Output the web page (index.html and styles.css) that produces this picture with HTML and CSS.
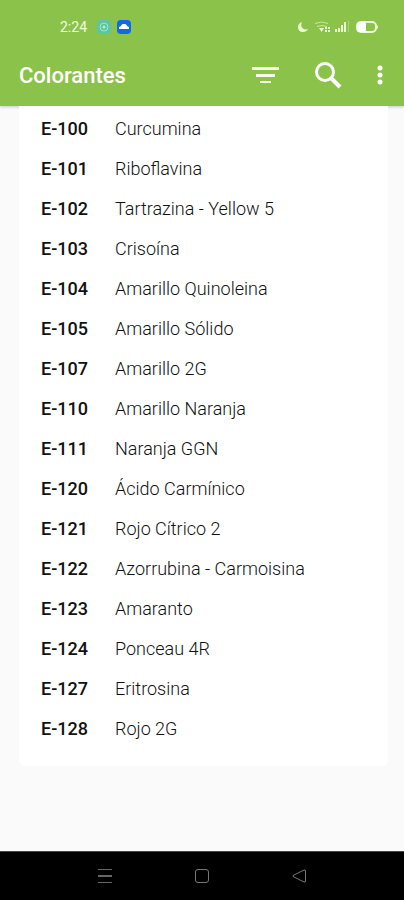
FILE: index.html
```
<!DOCTYPE html>
<html lang="es">
<head>
    <meta charset="UTF-8">
    <meta name="viewport" content="width=device-width, initial-scale=1.0">
    <title>Colorantes</title>
    <link rel="stylesheet" href="styles.css">
</head>
<body>
    <header>
        <div class="status-bar">
            <span class="time">2:24</span>
            <svg class="app-icon" width="14" height="14" viewBox="0 0 14 14">
                <rect width="14" height="14" rx="4" fill="#5cc6a4"/>
                <circle cx="7" cy="7" r="4" fill="none" stroke="#a5e3c4"/>
                <circle cx="7" cy="7" r="1.5" fill="#b5ead0"/>
            </svg>
            <svg class="app-icon" width="14" height="14" viewBox="0 0 14 14">
                <rect width="14" height="14" rx="4" fill="#0b6be8"/>
                <path d="M2 9V7l2-1c.3-1.500 1.400-2 3-2s2.700.5 3 2l2 1v2z" fill="#fff"/>
            </svg>
            <svg class="system-icons" width="84" height="14" viewBox="0 0 84 14" fill="#edf8d5">
                <path d="M5 2C2.500 3 1 4.500 1 7c0 3 2 5 5 5 2.300 0 4-1 5-3-3 1-5.500 0-6.300-2C4 5.500 4.200 3.500 5 2z"/>
                <path d="M18 3.500q7-3 13 0M20 6.500q5-2 10 0" fill="none" stroke="#c9e6a0"/>
                <path d="M22 8h5l-2.500 4zM28 7h2v2h-2zM31 7h2v2h-2zM28 10h2v2h-2zM31 10h2v2h-2z"/>
                <path d="M38 9h2v3h-2zM41 8h2v4h-2zM44 5h2v7h-2zM47 2h2v10h-2z"/>
                <path d="M51 1h1v11h-1z" fill="#a8d36f"/>
                <rect x="60" y="2" width="19" height="10" rx="4" fill="none" stroke="#edf8d5" stroke-width="2"/>
                <rect x="60" y="2" width="9" height="10" rx="2" fill="#fff"/>
                <path d="M80 5q2 2 0 4z"/>
            </svg>
        </div>
        <div class="app-bar">
            <h1>Colorantes</h1>
            <button type="button" aria-label="Filtrar">
                <svg width="28" height="18" viewBox="0 0 28 18" fill="#f6fce9">
                    <path d="M1 1h27v3H1zM5 8h19v3H5zM9 15h11v2H9z"/>
                </svg>
            </button>
            <button type="button" aria-label="Buscar">
                <svg width="28" height="28" viewBox="0 0 28 28" fill="none" stroke="#fff">
                    <circle cx="11" cy="11" r="8.500" stroke-width="3"/>
                    <path d="M17 17l9 9" stroke-width="4"/>
                </svg>
            </button>
            <button type="button" aria-label="Más opciones">
                <svg width="6" height="20" viewBox="0 0 6 20" fill="#fff">
                    <circle cx="3" cy="3" r="2.500"/>
                    <circle cx="3" cy="10" r="2.500"/>
                    <circle cx="3" cy="17" r="2.500"/>
                </svg>
            </button>
        </div>
    </header>

    <main>
        <div class="card">
            <table>
                <tr><th scope="row">E-100</th><td>Curcumina</td></tr>
                <tr><th scope="row">E-101</th><td>Riboflavina</td></tr>
                <tr><th scope="row">E-102</th><td>Tartrazina - Yellow 5</td></tr>
                <tr><th scope="row">E-103</th><td>Crisoína</td></tr>
                <tr><th scope="row">E-104</th><td>Amarillo Quinoleina</td></tr>
                <tr><th scope="row">E-105</th><td>Amarillo Sólido</td></tr>
                <tr><th scope="row">E-107</th><td>Amarillo 2G</td></tr>
                <tr><th scope="row">E-110</th><td>Amarillo Naranja</td></tr>
                <tr><th scope="row">E-111</th><td>Naranja GGN</td></tr>
                <tr><th scope="row">E-120</th><td>Ácido Carmínico</td></tr>
                <tr><th scope="row">E-121</th><td>Rojo Cítrico 2</td></tr>
                <tr><th scope="row">E-122</th><td>Azorrubina - Carmoisina</td></tr>
                <tr><th scope="row">E-123</th><td>Amaranto</td></tr>
                <tr><th scope="row">E-124</th><td>Ponceau 4R</td></tr>
                <tr><th scope="row">E-127</th><td>Eritrosina</td></tr>
                <tr><th scope="row">E-128</th><td>Rojo 2G</td></tr>
            </table>
        </div>
    </main>

    <nav>
        <button type="button" aria-label="Recientes">
            <svg width="16" height="16" viewBox="0 0 16 16" stroke="#666">
                <path d="M1 1.500h14M1 14.500h14"/>
                <path d="M1 8h14" stroke-width="2"/>
            </svg>
        </button>
        <button type="button" aria-label="Inicio">
            <svg width="16" height="16" viewBox="0 0 16 16" fill="none" stroke="#777">
                <rect x="1.500" y="1.500" width="13" height="13" rx="2.500"/>
            </svg>
        </button>
        <button type="button" aria-label="Atrás">
            <svg width="16" height="16" viewBox="0 0 16 16" fill="none" stroke="#777" stroke-linejoin="round">
                <path d="M14.500 3v10q0 1.500-1.500 1L2 8.500q-1-.5 0-1L13 2q1.500-.5 1.500 1z"/>
            </svg>
        </button>
    </nav>
</body>
</html>
```

FILE: styles.css
```
body {
    font-family: Roboto, sans-serif;
    margin: 0;
    min-height: 100vh;
    display: flex;
    flex-direction: column;
    background-color: #fafafa;
    color: #111;
}
header {
    background-color: #8bc34a;
    box-shadow: 0 1px 3px rgba(0, 0, 0, 0.2);
    padding: 16px 21px 0 19px;
}
svg {
    display: block;
}
button {
    background: none;
    border: none;
    padding: 0;
    cursor: pointer;
}
.status-bar {
    display: flex;
    align-items: center;
    height: 22px;
    padding: 0 2px 0 41px;
}
.time {
    font-size: 14px;
    color: #f1fae0;
    margin-right: 10px;
}
.app-icon {
    margin-right: 6px;
}
.system-icons {
    margin-left: auto;
}
.app-bar {
    display: flex;
    align-items: center;
    gap: 35px;
    height: 62px;
    margin-top: 6px;
}
h1 {
    flex: 1;
    margin: 0;
    font-size: 22px;
    font-weight: 500;
    color: #fff;
}
main {
    flex: 1;
    padding: 0 16px 0 19px;
}
.card {
    background-color: #fff;
    border-radius: 0 0 6px 6px;
    padding: 2px 22px 18px;
}
table {
    width: 100%;
    border-collapse: collapse;
    font-size: 18px;
}
tr {
    height: 40px;
}
th,
td {
    padding: 0;
    text-align: left;
}
th {
    width: 74px;
    font-weight: 500;
}
td {
    font-weight: 300;
}
nav {
    display: flex;
    justify-content: center;
    gap: 81px;
    padding: 16px 0;
    border-top: 1px solid #444;
    background-color: #000;
}
```
